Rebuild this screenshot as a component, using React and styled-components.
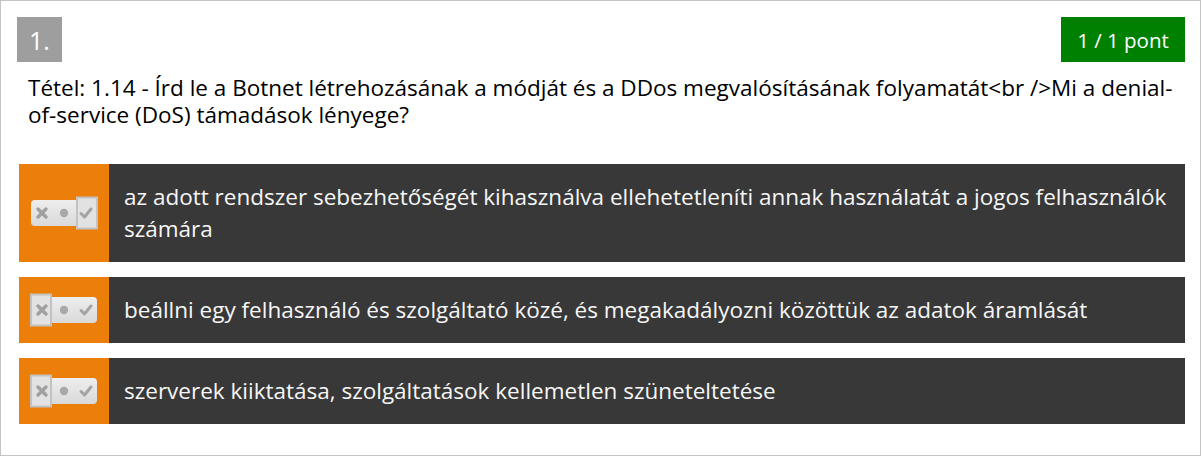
import React from 'react';
import styled, { createGlobalStyle } from 'styled-components';

const Global = createGlobalStyle`
  html, body { margin: 0; padding: 0; background: #fff; }
  body { font-family: "Open Sans", "Noto Sans", sans-serif; }
`;

const Card = styled.div`
  box-sizing: border-box;
  width: 1201px;
  height: 456px;
  border: 1px solid #c4c4c4;
  padding: 16px 15px 16px 16px;
`;

const Header = styled.div`
  display: flex;
  justify-content: space-between;
  align-items: flex-start;
`;

const Number = styled.div`
  width: 45px;
  height: 45px;
  background: #9e9e9e;
  color: #fff;
  font-size: 25px;
  display: flex;
  align-items: center;
  justify-content: center;
`;

const Points = styled.div`
  height: 45px;
  width: 124px;
  box-sizing: border-box;
  background: #008000;
  color: #fff;
  font-size: 20.5px;
  display: flex;
  align-items: center;
  justify-content: center;
`;

const Question = styled.div`
  margin: 12px 0 0 11px;
  font-size: 22.5px;
  line-height: 27px;
  color: #000;
`;

const Answers = styled.div`
  margin: 36px 0 0 2px;
  display: flex;
  flex-direction: column;
  gap: 15px;
`;

const Row = styled.div`
  display: flex;
  background: #383838;
`;

const Side = styled.div`
  width: 90px;
  flex-shrink: 0;
  background: #ec7f0a;
  display: flex;
  align-items: center;
  justify-content: center;
`;

const Text = styled.div`
  padding: 17px 15px;
  font-size: 22.5px;
  line-height: 32px;
  color: #f6f6f6;
`;

function Toggle({ value }) {
  const boxX = value === 'yes' ? 46 : 0;
  return (
    <svg width="68" height="34" viewBox="0 0 68 34">
      <defs>
        <linearGradient id="pill" x1="0" y1="0" x2="0" y2="1">
          <stop offset="0" stopColor="#eeeeee" />
          <stop offset="1" stopColor="#d9d9d9" />
        </linearGradient>
      </defs>
      <rect x="1" y="4" width="66" height="26" rx="4" fill="url(#pill)" />
      <rect x={boxX + 1} y="1.5" width="20" height="31" fill="#e2e2e2" stroke="#c2c2c2" strokeWidth="2" />
      <path d="M8 13 L16 21 M16 13 L8 21" stroke="#a0a0a0" strokeWidth="3.4" strokeLinecap="round" />
      <circle cx="34" cy="17" r="4.2" fill="#a8a8a8" />
      <path d="M51 17.5 L54.5 21 L61 13" stroke="#a4a4a4" strokeWidth="3" fill="none" strokeLinecap="round" strokeLinejoin="round" />
    </svg>
  );
}

const answers = [
  { value: 'yes', text: 'az adott rendszer sebezhetőségét kihasználva ellehetetleníti annak használatát a jogos felhasználók számára' },
  { value: 'no', text: 'beállni egy felhasználó és szolgáltató közé, és megakadályozni közöttük az adatok áramlását' },
  { value: 'no', text: 'szerverek kiiktatása, szolgáltatások kellemetlen szüneteltetése' },
];

export default function App() {
  return (
    <>
      <Global />
      <Card>
        <Header>
          <Number>1.</Number>
          <Points>1 / 1 pont</Points>
        </Header>
        <Question>
          Tétel: 1.14 - Írd le a Botnet létrehozásának a módját és a DDos megvalósításának folyamatát&lt;br /&gt;Mi a denial-of-service (DoS) támadások lényege?
        </Question>
        <Answers>
          {answers.map((a, i) => (
            <Row key={i}>
              <Side><Toggle value={a.value} /></Side>
              <Text>{a.text}</Text>
            </Row>
          ))}
        </Answers>
      </Card>
    </>
  );
}
